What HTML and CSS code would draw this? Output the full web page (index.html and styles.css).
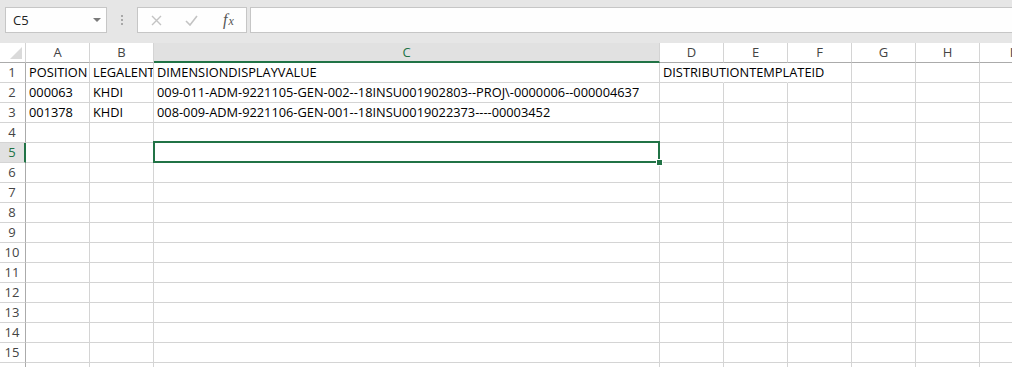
FILE: index.html
```html
<!DOCTYPE html>
<html lang="en">
<head>
<meta charset="utf-8">
<title>Sheet</title>
<link rel="stylesheet" href="styles.css">
</head>
<body>
<div class="app">
  <div class="toolbar">
    <div class="namebox"><span class="name">C5</span><span class="caret"></span></div>
    <div class="dots"><i></i><i></i><i></i></div>
    <div class="fxbox">
      <span class="slot"><svg width="11" height="11" viewBox="0 0 11 11"><path d="M1 1 L10 10 M10 1 L1 10" stroke="#c3c3c3" stroke-width="1.4" fill="none"/></svg></span>
      <span class="slot"><svg width="13" height="11" viewBox="0 0 13 11"><path d="M1 6 L5 10 L12 1" stroke="#c3c3c3" stroke-width="1.6" fill="none"/></svg></span>
      <span class="slot fx"><span class="f">f</span><span class="x">x</span></span>
    </div>
    <div class="formula"></div>
  </div>
  <div class="sheet">
    <div class="row head">
      <div class="rh corner"><span class="tri"></span></div>
      <div class="cell">A</div><div class="cell">B</div><div class="cell sel">C</div><div class="cell">D</div><div class="cell">E</div><div class="cell">F</div><div class="cell">G</div><div class="cell">H</div><div class="cell">I</div><div class="cell">J</div>
    </div>
    <div class="row">
      <div class="rh">1</div>
      <div class="cell">POSITION</div><div class="cell">LEGALENT</div><div class="cell">DIMENSIONDISPLAYVALUE</div><div class="cell spill">DISTRIBUTIONTEMPLATEID</div><div class="cell spill"></div><div class="cell"></div><div class="cell"></div><div class="cell"></div><div class="cell"></div><div class="cell"></div>
    </div>
    <div class="row">
      <div class="rh">2</div>
      <div class="cell">000063</div><div class="cell">KHDI</div><div class="cell">009-011-ADM-9221105-GEN-002--18INSU001902803--PROJ\-0000006--000004637</div><div class="cell"></div><div class="cell"></div><div class="cell"></div><div class="cell"></div><div class="cell"></div><div class="cell"></div><div class="cell"></div>
    </div>
    <div class="row">
      <div class="rh">3</div>
      <div class="cell">001378</div><div class="cell">KHDI</div><div class="cell">008-009-ADM-9221106-GEN-001--18INSU0019022373----00003452</div><div class="cell"></div><div class="cell"></div><div class="cell"></div><div class="cell"></div><div class="cell"></div><div class="cell"></div><div class="cell"></div>
    </div>
    <div class="row">
      <div class="rh">4</div>
      <div class="cell"></div><div class="cell"></div><div class="cell"></div><div class="cell"></div><div class="cell"></div><div class="cell"></div><div class="cell"></div><div class="cell"></div><div class="cell"></div><div class="cell"></div>
    </div>
    <div class="row">
      <div class="rh sel">5</div>
      <div class="cell"></div><div class="cell"></div><div class="cell active"><span class="selbox"><span class="handle"></span></span></div><div class="cell"></div><div class="cell"></div><div class="cell"></div><div class="cell"></div><div class="cell"></div><div class="cell"></div><div class="cell"></div>
    </div>
    <div class="row">
      <div class="rh">6</div>
      <div class="cell"></div><div class="cell"></div><div class="cell"></div><div class="cell"></div><div class="cell"></div><div class="cell"></div><div class="cell"></div><div class="cell"></div><div class="cell"></div><div class="cell"></div>
    </div>
    <div class="row">
      <div class="rh">7</div>
      <div class="cell"></div><div class="cell"></div><div class="cell"></div><div class="cell"></div><div class="cell"></div><div class="cell"></div><div class="cell"></div><div class="cell"></div><div class="cell"></div><div class="cell"></div>
    </div>
    <div class="row">
      <div class="rh">8</div>
      <div class="cell"></div><div class="cell"></div><div class="cell"></div><div class="cell"></div><div class="cell"></div><div class="cell"></div><div class="cell"></div><div class="cell"></div><div class="cell"></div><div class="cell"></div>
    </div>
    <div class="row">
      <div class="rh">9</div>
      <div class="cell"></div><div class="cell"></div><div class="cell"></div><div class="cell"></div><div class="cell"></div><div class="cell"></div><div class="cell"></div><div class="cell"></div><div class="cell"></div><div class="cell"></div>
    </div>
    <div class="row">
      <div class="rh">10</div>
      <div class="cell"></div><div class="cell"></div><div class="cell"></div><div class="cell"></div><div class="cell"></div><div class="cell"></div><div class="cell"></div><div class="cell"></div><div class="cell"></div><div class="cell"></div>
    </div>
    <div class="row">
      <div class="rh">11</div>
      <div class="cell"></div><div class="cell"></div><div class="cell"></div><div class="cell"></div><div class="cell"></div><div class="cell"></div><div class="cell"></div><div class="cell"></div><div class="cell"></div><div class="cell"></div>
    </div>
    <div class="row">
      <div class="rh">12</div>
      <div class="cell"></div><div class="cell"></div><div class="cell"></div><div class="cell"></div><div class="cell"></div><div class="cell"></div><div class="cell"></div><div class="cell"></div><div class="cell"></div><div class="cell"></div>
    </div>
    <div class="row">
      <div class="rh">13</div>
      <div class="cell"></div><div class="cell"></div><div class="cell"></div><div class="cell"></div><div class="cell"></div><div class="cell"></div><div class="cell"></div><div class="cell"></div><div class="cell"></div><div class="cell"></div>
    </div>
    <div class="row">
      <div class="rh">14</div>
      <div class="cell"></div><div class="cell"></div><div class="cell"></div><div class="cell"></div><div class="cell"></div><div class="cell"></div><div class="cell"></div><div class="cell"></div><div class="cell"></div><div class="cell"></div>
    </div>
    <div class="row">
      <div class="rh">15</div>
      <div class="cell"></div><div class="cell"></div><div class="cell"></div><div class="cell"></div><div class="cell"></div><div class="cell"></div><div class="cell"></div><div class="cell"></div><div class="cell"></div><div class="cell"></div>
    </div>
    <div class="row">
      <div class="rh"></div>
      <div class="cell"></div><div class="cell"></div><div class="cell"></div><div class="cell"></div><div class="cell"></div><div class="cell"></div><div class="cell"></div><div class="cell"></div><div class="cell"></div><div class="cell"></div>
    </div>
  </div>
</div>
</body>
</html>
```

FILE: styles.css
```css
html, body {
  margin: 0;
  padding: 0;
  background: #ffffff;
  overflow: hidden;
}
body {
  width: 1012px;
  height: 367px;
  font-family: "Open Sans", "Liberation Sans", Arial, sans-serif;
}
.app {
  width: 1012px;
  height: 367px;
  overflow: hidden;
}
.toolbar {
  box-sizing: border-box;
  height: 43px;
  background: #e6e6e6;
  display: flex;
  align-items: flex-start;
  padding: 7px 0 0 5px;
}
.namebox {
  box-sizing: border-box;
  width: 102px;
  height: 26px;
  background: #fefefe;
  border: 1px solid #c6c6c6;
  display: flex;
  align-items: center;
  justify-content: space-between;
  padding: 0 5px 0 7px;
}
.name {
  font-size: 13px;
  color: #222;
}
.caret {
  width: 0;
  height: 0;
  border-left: 4px solid transparent;
  border-right: 4px solid transparent;
  border-top: 4px solid #7a7a7a;
  margin-top: -1px;
}
.dots {
  margin: 8px 0 0 14px;
  width: 2px;
  display: flex;
  flex-direction: column;
  gap: 2px;
}
.dots i {
  display: block;
  width: 2px;
  height: 2px;
  background: #a8a8a8;
}
.fxbox {
  box-sizing: border-box;
  margin-left: 14px;
  width: 110px;
  height: 26px;
  background: #fefefe;
  border: 1px solid #c6c6c6;
  display: flex;
  align-items: center;
  padding-left: 1px;
}
.slot {
  width: 36px;
  display: flex;
  justify-content: center;
  align-items: center;
}
.fx {
  font-family: "Liberation Serif", "Times New Roman", serif;
  font-style: italic;
  color: #555;
  align-items: baseline;
  padding-left: 2px;
}
.fx .f {
  font-size: 16px;
}
.fx .x {
  font-size: 12px;
  margin-left: 1px;
}
.formula {
  box-sizing: border-box;
  margin-left: 3px;
  flex: 1;
  height: 26px;
  background: #fefefe;
  border: 1px solid #c6c6c6;
  border-right: none;
}

.sheet {
  width: 1200px;
  background: #ffffff;
}
.row {
  display: flex;
  height: 20px;
}
.rh {
  box-sizing: border-box;
  width: 26px;
  flex: none;
  border-right: 1px solid #ababab;
  border-bottom: 1px solid #d4d4d4;
  font-size: 13px;
  line-height: 19px;
  color: #444;
  text-align: center;
  padding-right: 1px;
}
.rh.sel {
  background: #e1e1e1;
  color: #217346;
  border-right: 2px solid #217346;
  padding-right: 0;
}
.cell {
  box-sizing: border-box;
  width: 64px;
  flex: none;
  border-right: 1px solid #d4d4d4;
  border-bottom: 1px solid #d4d4d4;
  font-size: 12.8px;
  line-height: 19px;
  color: #000;
  padding: 0 3px;
  white-space: nowrap;
  overflow: hidden;
}
.row > .cell:nth-child(4) {
  width: 506px;
}
.cell.spill {
  overflow: visible;
  border-right-color: transparent;
}
.cell.active {
  position: relative;
  overflow: visible;
}
.selbox {
  position: absolute;
  left: -1px;
  top: -2px;
  right: -1px;
  bottom: -1px;
  border: 2px solid #217346;
}
.handle {
  position: absolute;
  right: -5px;
  bottom: -5px;
  width: 5px;
  height: 5px;
  background: #217346;
  border: 1px solid #ffffff;
}
.head .cell {
  text-align: center;
  font-size: 13px;
  color: #444;
  border-bottom: 1px solid #ababab;
  padding: 0;
}
.head .cell.sel {
  background: #e1e1e1;
  color: #217346;
  border-bottom: 2px solid #217346;
}
.head .rh {
  border-bottom: 1px solid #ababab;
  border-right: 1px solid #d4d4d4;
}
.corner {
  display: flex;
  justify-content: flex-end;
  align-items: flex-end;
  padding: 0 3px 3px 0;
}
.tri {
  width: 0;
  height: 0;
  border-left: 12px solid transparent;
  border-bottom: 12px solid #dadada;
}
```
